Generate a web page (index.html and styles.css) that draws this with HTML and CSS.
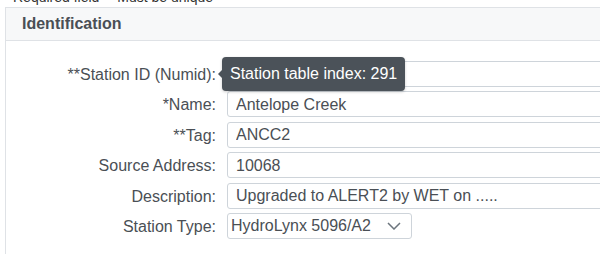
FILE: index.html
```html
<!DOCTYPE html>
<html lang="en">

<head>
    <meta charset="UTF-8">
    <meta name="viewport" content="width=device-width, initial-scale=1.0">
    <title>Station Identification</title>
    <link rel="stylesheet" href="styles.css">
</head>

<body>

    <div class="legend">
        <span>Required field</span>
        <span>Must be unique</span>
    </div>

    <div class="card">
        <div class="card-header">Identification</div>
        <div class="card-body">
            <label>**Station ID (Numid):</label>
            <div class="field">
                <input type="text" class="form-input" value="291">
                <div class="tooltip">Station table index: 291</div>
            </div>

            <label>*Name:</label>
            <input type="text" class="form-input" value="Antelope Creek">

            <label>**Tag:</label>
            <input type="text" class="form-input" value="ANCC2">

            <label>Source Address:</label>
            <input type="text" class="form-input" value="10068">

            <label>Description:</label>
            <input type="text" class="form-input" value="Upgraded to ALERT2 by WET on .....">

            <label>Station Type:</label>
            <div class="select-box">
                <span>HydroLynx 5096/A2</span>
                <svg width="14" height="8" viewBox="0 0 14 8"><path d="M1 1 L7 7 L13 1" fill="none" stroke="#6c757d" stroke-width="1.5"/></svg>
            </div>
        </div>
    </div>

</body>

</html>
```

FILE: styles.css
```css
body {
    font-family: "Liberation Sans", Arial, sans-serif;
    margin: 0;
    background-color: white;
    color: #4a4f55;
    overflow: hidden;
}

.legend {
    margin-top: -10px;
    padding-left: 13px;
    font-size: 14px;
    line-height: 14px;
    height: 17px;
    color: #333;
}

.legend span {
    margin-right: 14px;
}

.card {
    margin-left: 5px;
    width: 700px;
    border: 1px solid #dfe2e6;
    border-right: none;
}

.card-header {
    height: 32px;
    line-height: 32px;
    padding-left: 16px;
    background-color: #f7f8f9;
    border-bottom: 1px solid #dfe2e6;
    font-weight: bold;
    font-size: 16px;
    color: #4a4f55;
}

.card-body {
    display: grid;
    grid-template-columns: 210px 500px;
    column-gap: 11px;
    row-gap: 4.4px;
    padding-top: 20px;
    padding-bottom: 20px;
    align-items: center;
}

.card-body label {
    text-align: right;
    font-size: 16px;
    line-height: 20px;
    padding-top: 2px;
    color: #4a4f55;
}

.field {
    position: relative;
}

.form-input {
    box-sizing: border-box;
    width: 500px;
    height: 26px;
    padding: 1px 8px 0;
    border: 1px solid #ced4da;
    border-radius: 3px;
    font-family: "Liberation Sans", Arial, sans-serif;
    font-size: 16px;
    color: #4a4f55;
    display: block;
}

.tooltip {
    position: absolute;
    left: -5px;
    top: -4px;
    width: 183px;
    height: 34px;
    box-sizing: border-box;
    padding-left: 8px;
    line-height: 34px;
    background-color: #4b5259;
    color: white;
    font-size: 16px;
    border-radius: 4px;
    box-shadow: 0 1px 3px rgba(0, 0, 0, 0.2);
}

.tooltip::before {
    content: "";
    position: absolute;
    left: -4px;
    top: 13px;
    border-top: 4px solid transparent;
    border-bottom: 4px solid transparent;
    border-right: 4px solid #4b5259;
}

.select-box {
    box-sizing: border-box;
    width: 185px;
    height: 26px;
    padding: 1px 10px 0 3px;
    border: 1px solid #ced4da;
    border-radius: 3px;
    display: flex;
    align-items: center;
    justify-content: space-between;
    font-size: 16px;
    color: #4a4f55;
}
```
